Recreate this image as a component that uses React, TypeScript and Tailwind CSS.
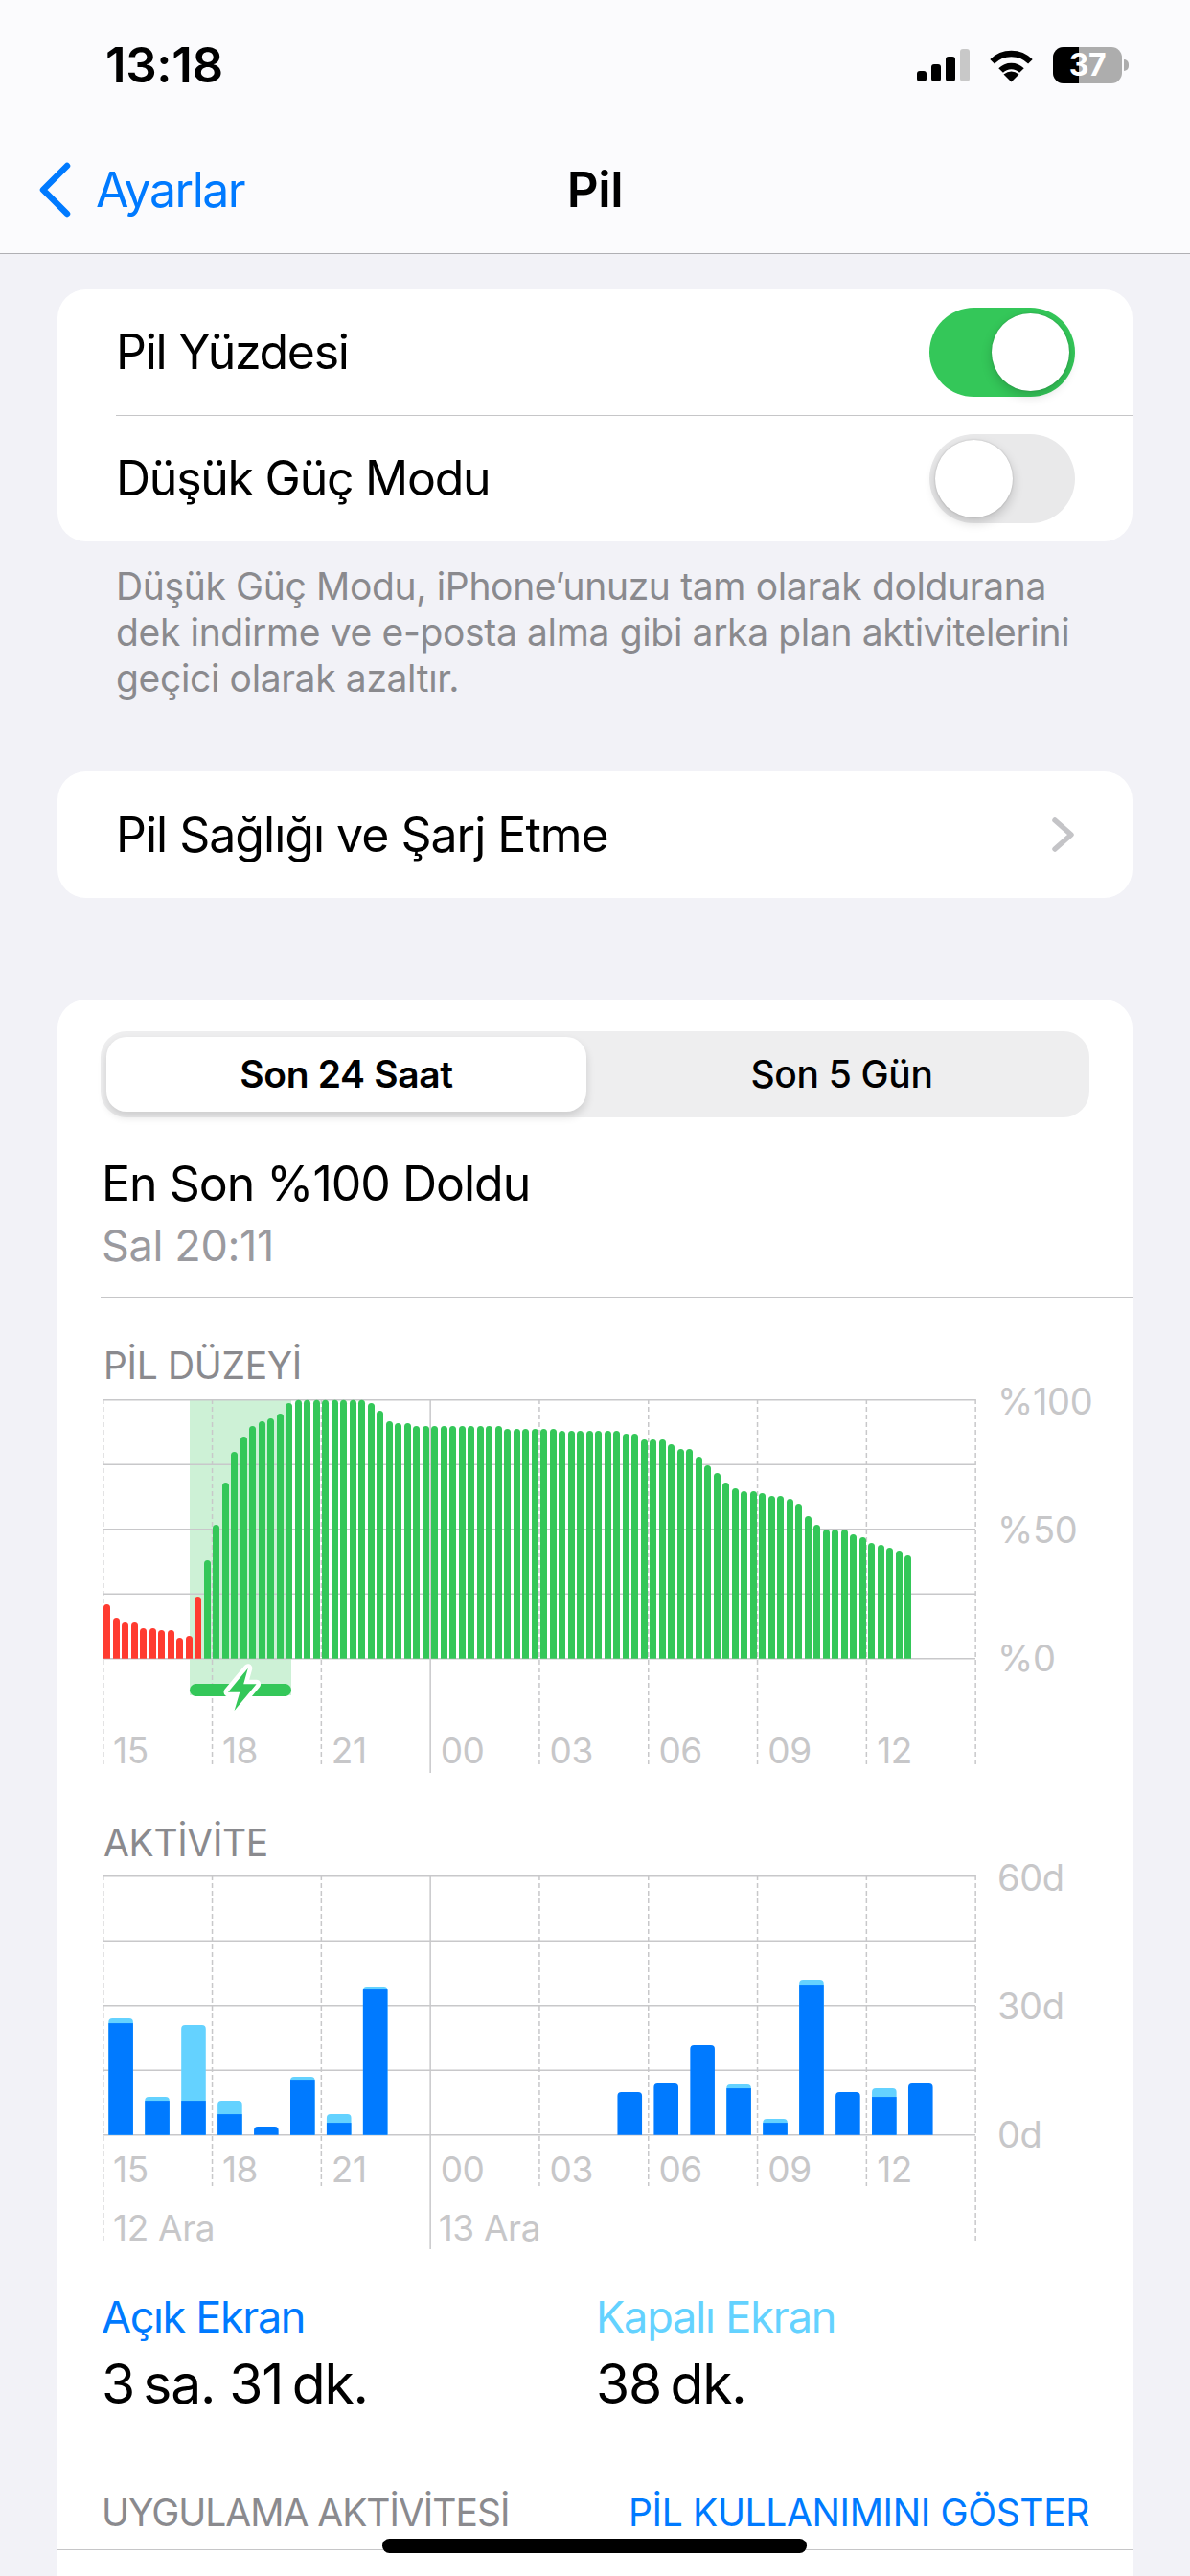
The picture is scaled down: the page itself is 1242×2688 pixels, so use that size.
const levelTops = [
  883, 925, 940, 940, 958, 958, 964, 964, 988, 982, 859,
  745, 634, 502, 406, 358, 325, 310, 301, 286, 253,
  243, 243, 243, 243, 243, 243, 243, 243,
  253, 277, 310, 316, 316,
  325, 325, 325, 325, 325, 325, 325, 325, 325, 325,
  334, 334, 334, 334, 334, 334,
  340, 340, 340, 340, 340, 340, 340,
  349, 349, 367, 367, 367, 382, 397, 397, 421, 448, 472, 502, 520, 529, 529,
  535, 544, 544, 553, 568, 607, 634, 649, 649, 649, 664, 673, 691, 697, 706, 715, 730,
];

// hour slot, light top, dark top (measured from the crops)
const activity = [
  [0, 678, 693], [1, 924, 936], [2, 699, 936], [3, 936, 978], [4, 1017, 1017],
  [5, 861, 870], [6, 978, 1005], [7, 579, 585], [14, 909, 909], [15, 882, 882],
  [16, 762, 762], [17, 885, 897], [18, 993, 1005], [19, 558, 573], [20, 909, 909],
  [21, 897, 924], [22, 882, 882],
];

const hours = ["15", "18", "21", "00", "03", "06", "09", "12"];

function topRounded(x: number, y: number, w: number, h: number, r: number) {
  const rr = Math.min(r, h);
  return `M${x} ${y + h}V${y + rr}Q${x} ${y} ${x + rr} ${y}H${x + w - rr}Q${x + w} ${y} ${x + w} ${y + rr}V${y + h}Z`;
}

function Grid({ shortInner }: { shortInner?: boolean }) {
  const xs = [0, 1, 2, 3, 4, 5, 6, 7, 8].map((i) => 0.75 + i * 113.8);
  return (
    <g stroke="#c8c8ca" strokeWidth="1.5">
      {[0, 67.5, 135, 202.5, 270].map((y) => (
        <line key={y} x1="0" x2="911" y1={y + 0.75} y2={y + 0.75} />
      ))}
      {xs.map((x, i) =>
        i === 3 ? (
          <line key={i} x1={x} x2={x} y1="0" y2="390" />
        ) : (
          <line
            key={i}
            x1={x}
            x2={x}
            y1="0"
            y2={shortInner && i !== 0 && i !== 8 ? 324 : 384}
            strokeDasharray="5 3"
          />
        ),
      )}
    </g>
  );
}

function Chart({ children, yLabels, activityAxis }: { children: React.ReactNode; yLabels: string[]; activityAxis?: boolean }) {
  return (
    <div className="flex ml-[2px]">
      <div className="relative w-[912px] h-[390px]">
        <svg width="912" height="390" className="block">
          {children}
        </svg>
        <div className={activityAxis ? "absolute left-0 top-[285px] grid grid-cols-8 w-[911px]" : "absolute left-0 top-[345px] grid grid-cols-8 w-[911px]"}>
          {hours.map((h) => (
            <span key={h} className="pl-[11px] text-[37px] leading-[44px] text-[#c7c7c9]">{h}</span>
          ))}
        </div>
        {activityAxis && (
          <div className="absolute left-0 top-[346px] grid grid-cols-8 w-[911px]">
            <span className="col-span-3 pl-[11px] text-[37px] leading-[44px] text-[#c7c7c9]">12 Ara</span>
            <span className="col-span-5 pl-[9px] text-[37px] leading-[44px] text-[#c7c7c9]">13 Ara</span>
          </div>
        )}
      </div>
      <div className="flex flex-col justify-between h-[270px] ml-[22px] pt-[2px]">
        {yLabels.map((l) => (
          <span key={l} className="h-0 flex items-center text-[38px] text-[#c7c7c9]">{l}</span>
        ))}
      </div>
    </div>
  );
}

function Toggle({ on }: { on?: boolean }) {
  return (
    <div className={on ? "w-[152px] h-[93px] rounded-full bg-[#34c759] p-[6px] flex justify-end" : "w-[152px] h-[93px] rounded-full bg-[#e9e9ea] p-[6px] flex justify-start"}>
      <div className="size-[81px] rounded-full bg-white shadow-[0_5px_12px_rgba(0,0,0,0.18),0_0_2px_rgba(0,0,0,0.2)]" />
    </div>
  );
}

function StatusIcons() {
  return (
    <div className="flex items-center mr-[64px]">
      <svg width="55" height="34" viewBox="0 0 55 34">
        <rect x="0" y="23" width="10" height="11" rx="3" fill="#000" />
        <rect x="15" y="16" width="10" height="18" rx="3" fill="#000" />
        <rect x="30" y="8" width="10" height="26" rx="3" fill="#000" />
        <rect x="45" y="0" width="10" height="34" rx="3" fill="#c8c8c8" />
      </svg>
      <svg width="47" height="35" viewBox="0 0 47 35" className="ml-[20px]" fill="none" stroke="#000" strokeWidth="6.5">
        <path d="M3.6 13.2A28 28 0 0 1 43.4 13.2" />
        <path d="M12.6 22.6A15.2 15.2 0 0 1 34.4 22.6" />
        <path d="M23.5 34.5L15.5 26.5Q23.5 20.5 31.5 26.5Z" fill="#000" stroke="none" />
      </svg>
      <div className="ml-[20px] relative w-[72px] h-[38px] rounded-[11px] overflow-hidden bg-[#adadad] flex">
        <div className="w-[27px] h-full bg-black" />
        <span className="absolute inset-0 flex items-center justify-center text-[32px] font-bold leading-none text-white">37</span>
      </div>
      <div className="ml-[2px] w-[5px] h-[12px] rounded-r-full bg-[#adadad]" />
    </div>
  );
}

export default function App() {
  return (
    <div className="w-[1242px] h-[2688px] overflow-hidden relative bg-[#f2f2f7] font-['Inter','Liberation_Sans',sans-serif] text-black tracking-[-0.022em]">
      <header className="h-[265px] bg-[#fbfbfd] border-b border-b-[#b0b0b4]">
        <div className="h-[136px] flex items-center justify-between">
          <span className="ml-[110px] text-[51px] leading-[60px] font-semibold">13:18</span>
          <StatusIcons />
        </div>
        <div className="relative flex items-center justify-center h-[64px] mt-[30px]">
          <div className="absolute left-[40px] flex items-center text-[#007aff]">
            <svg width="34" height="58" viewBox="0 0 34 58" fill="none" stroke="#007aff" strokeWidth="6.5" strokeLinecap="round" strokeLinejoin="round">
              <path d="M30 4L5 29L30 54" />
            </svg>
            <span className="ml-[26px] text-[50px] leading-[60px] tracking-[-0.03em]">Ayarlar</span>
          </div>
          <span className="text-[51px] leading-[60px] font-semibold">Pil</span>
        </div>
      </header>

      <main className="px-[60px] pt-[37px]">
        <section className="bg-white rounded-[30px] h-[263px]">
          <div className="h-[131px] flex items-center justify-between pl-[61px] pr-[60px]">
            <span className="text-[50px] tracking-[-0.026em]">Pil Yüzdesi</span>
            <Toggle on />
          </div>
          <div className="ml-[61px] h-px bg-[#c6c6c8]" />
          <div className="h-[131px] flex items-center justify-between pl-[61px] pr-[60px]">
            <span className="text-[50px] tracking-[-0.025em]">Düşük Güç Modu</span>
            <Toggle />
          </div>
        </section>
        <p className="pl-[61px] pt-[23px] text-[39px] leading-[48px] text-[#8a8a8e] whitespace-pre-line h-[240px]">
          {"Düşük Güç Modu, iPhone’unuzu tam olarak doldurana\ndek indirme ve e-posta alma gibi arka plan aktivitelerini\ngeçici olarak azaltır."}
        </p>

        <section className="bg-white rounded-[30px] h-[132px] flex items-center justify-between pl-[61px] pr-[60px]">
          <span className="text-[50px] tracking-[-0.02em]">Pil Sağlığı ve Şarj Etme</span>
          <svg width="25" height="38" viewBox="0 0 25 38" fill="none" stroke="#c4c4c7" strokeWidth="5.5" strokeLinecap="round" strokeLinejoin="round">
            <path d="M4 4L21 19L4 34" />
          </svg>
        </section>

        <section className="mt-[106px] bg-white rounded-t-[30px] h-[1700px] pt-[33px] pl-[45px]">
          <div className="w-[1032px] h-[90px] rounded-[27px] bg-[#eeeeef] p-[6px] flex">
            <div className="w-[501px] h-[78px] rounded-[21px] bg-white shadow-[0_5px_10px_rgba(0,0,0,0.14)] flex items-center justify-center text-[39px] font-semibold">
              Son 24 Saat
            </div>
            <div className="flex-1 flex items-center justify-center pl-[14px] text-[39px] font-medium">Son 5 Gün</div>
          </div>

          <p className="mt-[40px] pl-[1px] text-[50px] leading-[58px] tracking-[-0.02em]">En Son %100 Doldu</p>
          <p className="mt-[9px] pl-[1px] text-[45px] leading-[54px] text-[#9a9a9f]">Sal 20:11</p>
          <div className="mt-[26px] h-px bg-[#c6c6c8]" />

          <p className="mt-[48px] pl-[3px] text-[39px] leading-[46px] text-[#8a8a8e]">PİL DÜZEYİ</p>
          <div className="mt-[12px]">
            <Chart yLabels={["%100", "%50", "%0"]}>
              <rect x="91" y="0" width="106" height="309" fill="#cdf1d6" />
              <Grid />
              {levelTops.map((t, i) => {
                const h = (1053 - t) / 3;
                return (
                  <path
                    key={i}
                    d={topRounded(Math.round(1.2 + i * 9.5), 270.75 - h, 7, h, 3.5)}
                    fill={i < 11 ? "#ff3b30" : "#34c759"}
                  />
                );
              })}
              <rect x="91" y="297" width="106" height="13" rx="6.5" fill="#34c759" />
              <path
                d="M151.8 280.7L131 305.7H143.3L137.6 325L160.6 297.3H147.2Z"
                fill="#34c759"
                stroke="#fff"
                strokeWidth="9"
                strokeLinejoin="round"
                paintOrder="stroke"
              />
            </Chart>
          </div>

          <p className="mt-[50px] pl-[3px] text-[39px] leading-[46px] text-[#8a8a8e]">AKTİVİTE</p>
          <div className="mt-[11px]">
            <Chart yLabels={["60d", "30d", "0d"]} activityAxis>
              <Grid shortInner />
              {activity.map(([slot, light, dark]) => {
                const x = 6.3 + slot * 37.94;
                return (
                  <g key={slot}>
                    <path d={topRounded(x, 270.75 - (1043 - light) / 3, 25.6, (1043 - light) / 3, 4)} fill={light === dark ? "#007aff" : "#64d2ff"} />
                    {light !== dark && <rect x={x} y={270.75 - (1043 - dark) / 3} width="25.6" height={(1043 - dark) / 3} fill="#007aff" />}
                  </g>
                );
              })}
            </Chart>
          </div>

          <div className="mt-[44px] flex pl-[1px]">
            <div className="w-[516px]">
              <p className="text-[45px] leading-[54px] tracking-[-0.03em] text-[#007aff]">Açık Ekran</p>
              <p className="mt-[7px] text-[57px] leading-[72px] tracking-[-0.02em]">3{"\u2009"}sa. 31{"\u2009"}dk.</p>
            </div>
            <div>
              <p className="text-[45px] leading-[54px] tracking-[-0.025em] text-[#64d2ff]">Kapalı Ekran</p>
              <p className="mt-[7px] text-[57px] leading-[72px] tracking-[-0.02em]">38{"\u2009"}dk.</p>
            </div>
          </div>

          <div className="mt-[75px] pl-[1px] pr-[45px] flex justify-between text-[39px] leading-[46px]">
            <span className="text-[#8a8a8e] tracking-[-0.026em]">UYGULAMA AKTİVİTESİ</span>
            <span className="text-[#007aff]">PİL KULLANIMINI GÖSTER</span>
          </div>
          <div className="mt-[15px] -ml-[45px] h-px bg-[#c6c6c8]" />
        </section>
      </main>

      <div className="absolute left-[399px] top-[2649px] w-[443px] h-[15px] rounded-full bg-black" />
    </div>
  );
}
